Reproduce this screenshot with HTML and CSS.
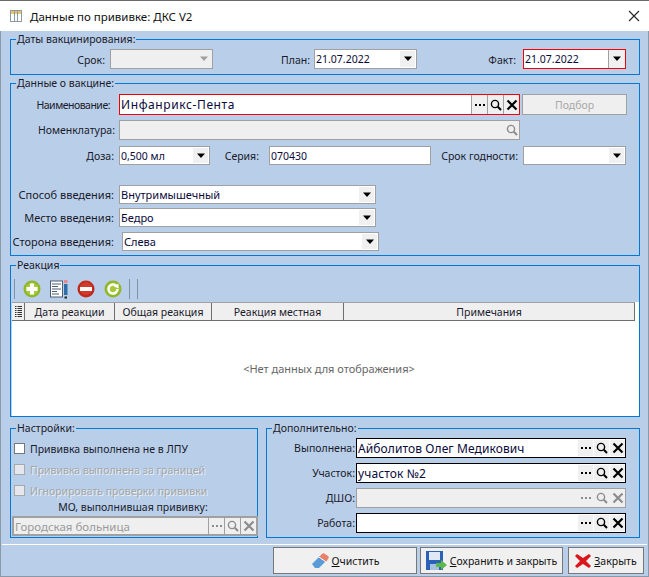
FILE: index.html
```html
<!DOCTYPE html>
<html lang="ru">

<head>
  <meta charset="UTF-8">
  <title>Данные по прививке: ДКС V2</title>
  <link rel="stylesheet" href="styles.css">
</head>

<body>
  <svg class="defs" width="0" height="0">
    <symbol id="i-arrow" viewBox="0 0 10 6"><path d="M1 0.5h8l-4 4.5z" fill="currentColor"/></symbol>
    <symbol id="i-dots" viewBox="0 0 12 12"><path d="M1 5h2v2H1zM5 5h2v2H5zM9 5h2v2H9z" fill="currentColor"/></symbol>
    <symbol id="i-find" viewBox="0 0 12 12"><circle cx="5" cy="5" r="3.6" fill="none" stroke="currentColor" stroke-width="1.4"/><path d="M7.8 7.8l3.2 3.2" stroke="currentColor" stroke-width="2"/></symbol>
    <symbol id="i-clear" viewBox="0 0 12 12"><path d="M1.500 1.500l9 9M10.500 1.500l-9 9" stroke="currentColor" stroke-width="2.200"/></symbol>
  </svg>

  <!-- Title bar -->
  <header class="titlebar">
    <svg class="title-icon" width="14" height="14" viewBox="0 0 14 14">
      <rect x="1.500" y="1.500" width="11" height="11" fill="#fff" stroke="#8c9aa8"/>
      <rect x="2" y="2" width="10" height="3" fill="#e8c860"/>
      <path d="M5.500 2v10M8.500 2v10" stroke="#8c9aa8"/>
    </svg>
    <span class="title-text">Данные по прививке: ДКС V2</span>
    <svg class="title-close" width="12" height="12" viewBox="0 0 12 12">
      <path d="M1 1l10 10M11 1L1 11" stroke="#222" stroke-width="1.100"/>
    </svg>
  </header>

  <main class="content">
    <!-- Dates -->
    <fieldset class="group group-dates">
      <legend>Даты вакцинирования:</legend>
      <div class="row">
        <label class="lbl lbl-srok">Срок:</label>
        <div class="field off w-103"><span class="val"></span><span class="drop"><svg width="10" height="6"><use href="#i-arrow"/></svg></span></div>
        <label class="lbl lbl-plan">План:</label>
        <div class="field w-103"><span class="val num">21.07.2022</span><span class="drop"><svg width="10" height="6"><use href="#i-arrow"/></svg></span></div>
        <label class="lbl lbl-fact">Факт:</label>
        <div class="field req w-103"><span class="val num">21.07.2022</span><span class="drop drop-line"><svg width="10" height="6"><use href="#i-arrow"/></svg></span></div>
      </div>
    </fieldset>

    <!-- Vaccine -->
    <fieldset class="group group-vaccine">
      <legend>Данные о вакцине:</legend>
      <div class="row row-name">
        <label class="lbl lbl-name">Наименование:</label>
        <div class="field req w-401">
          <span class="val">Инфанрикс-Пента</span>
          <span class="btn btn-line"><svg width="12" height="12"><use href="#i-dots"/></svg></span>
          <span class="btn btn-line"><svg width="12" height="12"><use href="#i-find"/></svg></span>
          <span class="btn btn-line"><svg width="12" height="12"><use href="#i-clear"/></svg></span>
        </div>
        <div class="pick">Подбор</div>
      </div>
      <div class="row row-nom">
        <label class="lbl lbl-nom">Номенклатура:</label>
        <div class="field off w-401"><span class="val"></span><span class="btn"><svg width="12" height="12"><use href="#i-find"/></svg></span></div>
      </div>
      <div class="row row-dose">
        <label class="lbl lbl-dose">Доза:</label>
        <div class="field w-91"><span class="val num">0,500 мл</span><span class="drop"><svg width="10" height="6"><use href="#i-arrow"/></svg></span></div>
        <label class="lbl lbl-series">Серия:</label>
        <div class="field w-162"><span class="val num">070430</span></div>
        <label class="lbl lbl-best">Срок годности:</label>
        <div class="field w-103"><span class="val"></span><span class="drop"><svg width="10" height="6"><use href="#i-arrow"/></svg></span></div>
      </div>
      <div class="row row-way">
        <label class="lbl lbl-way">Способ введения:</label>
        <div class="field w-257"><span class="val small">Внутримышечный</span><span class="drop"><svg width="10" height="6"><use href="#i-arrow"/></svg></span></div>
      </div>
      <div class="row row-place">
        <label class="lbl lbl-way">Место введения:</label>
        <div class="field w-257"><span class="val small">Бедро</span><span class="drop"><svg width="10" height="6"><use href="#i-arrow"/></svg></span></div>
      </div>
      <div class="row row-side">
        <label class="lbl lbl-way">Сторона введения:</label>
        <div class="field w-257 shift"><span class="val small">Слева</span><span class="drop"><svg width="10" height="6"><use href="#i-arrow"/></svg></span></div>
      </div>
    </fieldset>

    <!-- Reaction -->
    <fieldset class="group group-reaction">
      <legend>Реакция</legend>
      <div class="toolbar">
        <span class="tb-sep"></span>
        <svg class="tb-add" width="18" height="18" viewBox="0 0 18 18">
          <circle cx="9" cy="9" r="8.500" fill="#8fb629"/><circle cx="9" cy="9" r="6.500" fill="#a4c93c"/>
          <path d="M7 3.500h4V7h3.500v4H11v3.500H7V11H3.500V7H7z" fill="#fff"/>
        </svg>
        <svg class="tb-edit" width="18" height="20" viewBox="0 0 18 20">
          <rect x="0.500" y="2" width="12" height="16" fill="#fff" stroke="#4d5f70"/>
          <path d="M2 5h9M2 7.500h6M2 10h9M2 12.500h5M2 15h7" stroke="#4d5f70"/>
          <rect x="14" y="1" width="3.500" height="3" fill="#e88"/>
          <rect x="14" y="5" width="3.500" height="11" fill="#2f6ea8"/>
          <rect x="14.500" y="17.500" width="2.500" height="2" fill="#222"/>
        </svg>
        <svg class="tb-del" width="18" height="18" viewBox="0 0 18 18">
          <circle cx="9" cy="9" r="8.500" fill="#c0281c"/><circle cx="9" cy="8.500" r="6.500" fill="#d23a2c"/>
          <rect x="3" y="7" width="12" height="4" fill="#fff"/>
        </svg>
        <svg class="tb-refresh" width="18" height="18" viewBox="0 0 18 18">
          <circle cx="9" cy="9" r="8.500" fill="#8fb629"/><circle cx="9" cy="9" r="6.500" fill="#a4c93c"/>
          <path d="M13.500 9a4.500 4.500 0 1 1-1.700-3.500" fill="none" stroke="#fff" stroke-width="2.400"/>
          <path d="M10 6.500l4.500-3v5z" fill="#fff"/>
        </svg>
        <span class="tb-sep tb-sep-a"></span>
        <span class="tb-sep tb-sep-b"></span>
      </div>
      <div class="grid">
        <div class="grid-head">
          <span class="col col-grip"><svg width="7" height="11" viewBox="0 0 7 11"><path d="M0 .5h1.500M2.500 .5h4.500M0 2.500h1.500M2.500 2.500h4.500M0 4.500h1.500M2.500 4.500h4.500M0 6.500h1.500M2.500 6.500h4.500M0 8.500h1.500M2.500 8.500h4.500M0 10.500h1.500M2.500 10.500h4.500" stroke="#333"/></svg></span>
          <span class="col col-date">Дата реакции</span>
          <span class="col col-common">Общая реакция</span>
          <span class="col col-local">Реакция местная</span>
          <span class="col col-notes">Примечания</span>
        </div>
        <div class="grid-body">&lt;Нет данных для отображения&gt;</div>
      </div>
    </fieldset>

    <div class="bottom">
      <!-- Settings -->
      <fieldset class="group group-settings">
        <legend>Настройки:</legend>
        <div class="check"><span class="box"></span>Прививка выполнена не в ЛПУ</div>
        <div class="check check-off"><span class="box"></span>Прививка выполнена за границей</div>
        <div class="check check-off"><span class="box"></span>Игнорировать проверки прививки</div>
        <div class="mo-label">МО, выполнившая прививку:</div>
        <div class="field off mo-field">
          <span class="val">Городская больница</span>
          <span class="btn btn-line"><svg width="12" height="12"><use href="#i-dots"/></svg></span>
          <span class="btn btn-line"><svg width="12" height="12"><use href="#i-find"/></svg></span>
          <span class="btn btn-line"><svg width="12" height="12"><use href="#i-clear"/></svg></span>
        </div>
      </fieldset>

      <!-- Additional -->
      <fieldset class="group group-extra">
        <legend>Дополнительно:</legend>
        <div class="row extra-row">
          <label class="lbl lbl-extra">Выполнена:</label>
          <div class="field dark w-270">
            <span class="val">Айболитов Олег Медикович</span>
            <span class="btn"><svg width="12" height="12"><use href="#i-dots"/></svg></span>
            <span class="btn"><svg width="12" height="12"><use href="#i-find"/></svg></span>
            <span class="btn"><svg width="12" height="12"><use href="#i-clear"/></svg></span>
          </div>
        </div>
        <div class="row extra-row">
          <label class="lbl lbl-extra">Участок:</label>
          <div class="field dark w-270">
            <span class="val">участок №2</span>
            <span class="btn"><svg width="12" height="12"><use href="#i-dots"/></svg></span>
            <span class="btn"><svg width="12" height="12"><use href="#i-find"/></svg></span>
            <span class="btn"><svg width="12" height="12"><use href="#i-clear"/></svg></span>
          </div>
        </div>
        <div class="row extra-row">
          <label class="lbl lbl-extra">ДШО:</label>
          <div class="field off w-270">
            <span class="val"></span>
            <span class="btn"><svg width="12" height="12"><use href="#i-dots"/></svg></span>
            <span class="btn"><svg width="12" height="12"><use href="#i-find"/></svg></span>
            <span class="btn"><svg width="12" height="12"><use href="#i-clear"/></svg></span>
          </div>
        </div>
        <div class="row extra-row">
          <label class="lbl lbl-extra">Работа:</label>
          <div class="field dark w-270">
            <span class="val"></span>
            <span class="btn"><svg width="12" height="12"><use href="#i-dots"/></svg></span>
            <span class="btn"><svg width="12" height="12"><use href="#i-find"/></svg></span>
            <span class="btn"><svg width="12" height="12"><use href="#i-clear"/></svg></span>
          </div>
        </div>
      </fieldset>
    </div>
  </main>

  <!-- Footer buttons -->
  <footer class="footer">
    <button class="action action-clear">
      <svg width="18" height="16" viewBox="0 0 18 16">
        <path d="M1 11l8-8 6 5-7 7H4z" fill="#5b9bd8"/>
        <path d="M8 4l3-3c1-1 2-1 3 0l3 2c1 1 1 2 0 3l-2 3z" fill="#e8806a"/>
        <path d="M8 4l7 5" stroke="#fff"/>
      </svg>
      <span><u>О</u>чистить</span>
    </button>
    <button class="action action-save">
      <svg width="21" height="20" viewBox="0 0 21 20">
        <rect x="0" y="0" width="17" height="19" fill="#2a62b8"/>
        <rect x="3" y="1" width="11" height="8" fill="#dfe8f4"/>
        <rect x="4" y="13" width="9" height="6" fill="#a8c0e0"/>
        <path d="M10 12h5V9l6 5-6 5v-3h-5z" fill="#5cb848"/>
      </svg>
      <span><u>С</u>охранить и закрыть</span>
    </button>
    <button class="action action-close">
      <svg width="16" height="16" viewBox="0 0 16 16">
        <path d="M2 1l6 4 6-4 2 2-5 5 5 5-2 2-6-4-6 4-2-2 5-5-5-5z" fill="#d8161c"/>
      </svg>
      <span><u>З</u>акрыть</span>
    </button>
  </footer>
</body>

</html>
```

FILE: styles.css
```css
/* Page */
html,
body {
  margin: 0;
  height: 100%;
  overflow: hidden;
}

body {
  width: 649px;
  height: 577px;
  background-color: #b9cfe9;
  box-shadow: inset 1px -1px 0 #8a98a8, inset -1px 0 0 #8a98a8;
  font-family: "Noto Sans", sans-serif;
  font-size: 10.5px;
  color: #1a1a2a;
}

.defs {
  display: block;
  height: 0;
}

/* Title bar */
.titlebar {
  display: flex;
  align-items: center;
  height: 30px;
  background-color: #fff;
  border-top: 1px solid #6a6a6a;
  padding: 0 9px;
}

.title-icon {
  margin-right: 7px;
}

.title-text {
  font-size: 11.5px;
  color: #111;
}

.title-close {
  margin-left: auto;
}

/* Group boxes */
.content {
  padding: 0 9px 0 10px;
}

.group {
  margin: 0;
  padding: 0;
  min-width: 0;
  border: 1px solid #0078d7;
  box-sizing: border-box;
  display: block;
}

.group legend {
  margin-left: 5px;
  padding: 0 1px;
  height: 14px;
  line-height: 14px;
  font-size: 10.5px;
}

.group-dates {
  height: 43px;
  margin-top: 1px;
}

.group-vaccine {
  height: 180px;
  margin-top: 1px;
}

.group-reaction {
  height: 159px;
  margin-top: 2px;
}

.bottom {
  display: flex;
  gap: 8px;
  margin-top: 4px;
}

.group-settings {
  width: 248px;
  height: 117px;
}

.group-extra {
  width: 374px;
  height: 117px;
}

/* Form rows */
.row {
  display: flex;
  align-items: center;
  height: 20px;
}

.lbl {
  flex: none;
  text-align: right;
  white-space: nowrap;
  font-size: 10.5px;
}

.group-dates .lbl {
  padding-top: 1px;
}

.lbl-srok {
  width: 94px;
  margin-right: 5px;
}

.lbl-plan {
  width: 92px;
  margin-left: 5px;
  margin-right: 4px;
}

.lbl-fact {
  width: 95px;
  margin-left: 4px;
  margin-right: 7px;
}

.lbl-name {
  width: 99px;
  margin-right: 9px;
  letter-spacing: -0.5px;
}

.lbl-nom {
  width: 104px;
  margin-right: 4px;
}

.lbl-dose {
  width: 103px;
  margin-right: 5px;
}

.lbl-series {
  width: 49px;
  margin-right: 10px;
}

.lbl-best {
  width: 87px;
  margin-right: 5px;
}

.lbl-way {
  width: 103px;
  margin-right: 5px;
  font-size: 11px;
}

.lbl-extra {
  width: 88px;
  margin-right: 1px;
}

.group-dates .row {
  margin-top: 3px;
}

.row-name {
  height: 21px;
  margin-top: 4px;
}

.row-nom {
  margin-top: 5px;
}

.row-dose {
  height: 19px;
  margin-top: 6px;
}

.row-way {
  height: 19px;
  margin-top: 20px;
}

.row-place {
  height: 19px;
  margin-top: 4px;
}

.row-side {
  height: 19px;
  margin-top: 5px;
}

.extra-row {
  margin-top: 5px;
}

.group-extra .extra-row:first-of-type {
  margin-top: 3px;
}

/* Inputs */
.field {
  flex: none;
  display: flex;
  align-items: center;
  box-sizing: border-box;
  height: 100%;
  border: 1px solid #a0a0a0;
  background-color: #fff;
  overflow: hidden;
}

.field.req {
  border-color: #f00000;
}

.field.dark {
  border-color: #000;
}

.field.off {
  background-color: #efefef;
  color: #8a8a8a;
}

.w-91 {
  width: 91px;
}

.w-103 {
  width: 103px;
}

.w-162 {
  width: 162px;
}

.w-257 {
  width: 257px;
}

.w-270 {
  width: 270px;
}

.w-401 {
  width: 401px;
}

.shift {
  margin-left: 3px;
}

.val {
  flex: 1;
  padding-left: 1px;
  font-size: 12px;
  letter-spacing: 0.6px;
  white-space: nowrap;
  color: #0a0a3a;
}

.val.small {
  font-size: 11px;
  letter-spacing: 0;
}

.val.num {
  font-size: 10.5px;
  letter-spacing: 0;
}

.dark .val {
  letter-spacing: 0.1px;
}

.off .val {
  color: #8a8a8a;
}

.drop {
  flex: none;
  display: flex;
  align-items: center;
  justify-content: center;
  align-self: stretch;
  width: 15px;
  margin: 1px;
  background-color: #f0f0f0;
  color: #000;
}

.off .drop {
  background: none;
  color: #a0a0a0;
}

.drop-line {
  margin: 0;
  width: 16px;
  border-left: 1px solid #a0a0a0;
}

.btn {
  flex: none;
  display: flex;
  align-items: center;
  justify-content: center;
  align-self: stretch;
  width: 15px;
  margin: 1px 0 1px 1px;
  background-color: #f0f0f0;
  color: #000;
}

.btn-line {
  margin: 0;
  width: 15px;
  border-left: 1px solid #a0a0a0;
}

.off .btn {
  color: #8c8c8c;
  background: none;
}

.pick {
  flex: none;
  display: flex;
  align-items: center;
  justify-content: center;
  box-sizing: border-box;
  width: 105px;
  height: 21px;
  margin-left: 2px;
  border: 1px solid #a0a0a0;
  background-color: #efefef;
  color: #a8a8a8;
}

/* Toolbar */
.toolbar {
  display: flex;
  align-items: center;
  height: 23px;
  margin-top: 5px;
}

.tb-sep {
  width: 1px;
  height: 20px;
  margin-left: 3px;
  background-color: #7f93a8;
}

.tb-add {
  margin-left: 8px;
}

.tb-edit {
  margin-left: 9px;
}

.tb-del {
  margin-left: 9px;
}

.tb-refresh {
  margin-left: 9px;
}

.tb-sep-a {
  margin-left: 7px;
}

.tb-sep-b {
  margin-left: 7px;
}

/* Reaction table */
.grid {
  margin: 2px 0 0 1px;
  background-color: #fff;
}

.grid-head {
  display: flex;
  height: 19px;
  margin-right: 4px;
  background-color: #efefef;
  border-top: 1px solid #a0a0a0;
  border-bottom: 1px solid #6e6e6e;
  box-sizing: border-box;
}

.col {
  display: flex;
  align-items: center;
  justify-content: center;
  box-sizing: border-box;
  border-right: 1px solid #6e6e6e;
  white-space: nowrap;
}

.col-grip {
  width: 13px;
}

.col-date {
  width: 90px;
}

.col-common {
  width: 97px;
}

.col-local {
  width: 132px;
}

.col-notes {
  width: 291px;
}

.grid-body {
  display: flex;
  align-items: center;
  justify-content: center;
  height: 95px;
  padding-left: 7px;
  color: #666;
  font-size: 11px;
}

/* Settings */
.check {
  display: flex;
  align-items: center;
  height: 21px;
  padding-left: 3px;
  white-space: nowrap;
}

.check:first-of-type {
  margin-top: 3px;
}

.box {
  box-sizing: border-box;
  width: 11px;
  height: 11px;
  margin-right: 5px;
  border: 1px solid #777;
  background-color: #fff;
}

.check-off {
  color: #a6a6a6;
  text-shadow: 1px 1px 0 #e8f0f8;
}

.check-off .box {
  border-color: #a8a8a8;
  background-color: #e4e8ee;
}

.mo-label {
  height: 14px;
  line-height: 14px;
  margin-top: -1px;
  text-align: center;
  padding-right: 2px;
}

.mo-field {
  width: 246px;
  height: 20px;
  margin: 2px 0 0 1px;
  border-width: 2px;
}

.mo-field .val {
  font-size: 11.5px;
  letter-spacing: 0;
  color: #9a9a9a;
}

/* Footer */
.footer {
  display: flex;
  justify-content: flex-end;
  gap: 5px;
  box-sizing: border-box;
  height: 33px;
  margin: 6px 2px 0;
  padding: 2px 3px 0 0;
  border-top: 1px solid #fff;
}

.action {
  display: flex;
  align-items: center;
  justify-content: center;
  gap: 3px;
  box-sizing: border-box;
  height: 27px;
  padding: 0;
  border: 1px solid #777;
  background-color: #f0f0f0;
  font-family: "Noto Sans", sans-serif;
  font-size: 10.5px;
  color: #111;
  white-space: nowrap;
}

.action-clear {
  width: 144px;
}

.action-save {
  width: 143px;
  margin-left: -2px;
}

.action-close {
  width: 76px;
}
```
